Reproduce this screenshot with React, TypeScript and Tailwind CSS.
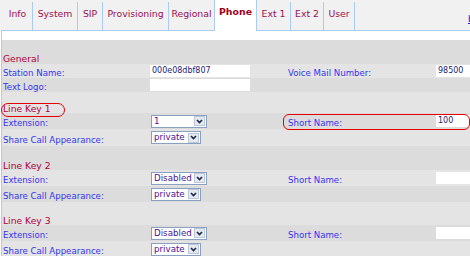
import type { FC, ReactNode } from "react"

// Tab strip (widths include the 1px separator on the right)
const tabs = [
  { label: "Info", w: "w-[30px]" },
  { label: "System", w: "w-[45px]" },
  { label: "SIP", w: "w-[25px]" },
  { label: "Provisioning", w: "w-[66px]" },
  { label: "Regional", w: "w-[45px]", noSep: true },
  { label: "Phone", w: "w-[43px]", active: true },
  { label: "Ext 1", w: "w-[34px]" },
  { label: "Ext 2", w: "w-[33px]" },
  { label: "User", w: "w-[31px]" },
]

const Label: FC<{ children: ReactNode }> = ({ children }) => (
  <span className="whitespace-nowrap text-[8.6px] leading-none text-[#3434f0]">{children}</span>
)

const TextBox: FC<{ value?: string; w?: string }> = ({ value = "", w = "w-[100px]" }) => (
  <div className={`h-[12px] ${w} bg-white pl-[2px] text-[8px] leading-[12px] text-[#22227a]`}>{value}</div>
)

const Chevron = () => (
  <svg width="7" height="5" viewBox="0 0 7 5">
    <path d="M1 1 L3.5 3.6 L6 1" fill="none" stroke="#1c2448" strokeWidth="1.6" />
  </svg>
)

const Select: FC<{ value: string; w: string }> = ({ value, w }) => (
  <div className={`ml-px flex h-[13px] ${w} items-center border border-[#8aa0c0] bg-white`}>
    <span className="flex-1 pl-[2px] text-[8.7px] leading-none text-[#4a1296]">{value}</span>
    <div className="mr-px flex h-[10px] w-[11px] items-center justify-center border border-[#bcc8da] bg-[#e4e9f1]">
      <Chevron />
    </div>
  </div>
)

const Row: FC<{
  h: string
  bg: string
  label?: string
  value?: ReactNode
  label2?: string
  value2?: ReactNode
}> = ({ h, bg, label, value, label2, value2 }) => (
  <div className={`flex ${h} items-center ${bg}`}>
    <div className="w-[148px] shrink-0 pl-px">{label && <Label>{label}</Label>}</div>
    <div className="w-[133px] shrink-0">{value}</div>
    <div className="w-[153px] shrink-0 pl-[5px]">{label2 && <Label>{label2}</Label>}</div>
    <div className="min-w-0 flex-1">{value2}</div>
  </div>
)

const Heading: FC<{ text: string; h: string; bg: string; lead?: string }> = ({
  text,
  h,
  bg,
  lead = "leading-[9px]",
}) => (
  <div className={`flex ${h} items-end ${bg} pl-px`}>
    <span className={`text-[9.2px] ${lead} text-[#b0003a]`}>{text}</span>
  </div>
)

const DARK = "bg-[#dcdcdc]"
const LIGHT = "bg-[#e4e4e4]"

export default function App() {
  return (
    <div className="relative h-[256px] w-[470px] overflow-hidden bg-white font-['DejaVu_Sans',Verdana,sans-serif]">
      {/* Tab bar */}
      <div className="flex h-[30px] items-start bg-[#f1f1f1] pl-[3px]">
        {tabs.map((t) =>
          t.active ? (
            <div
              key={t.label}
              className={`relative z-10 flex h-[31px] shrink-0 ${t.w} justify-center border-x border-[#a9cdf2] bg-white pt-[7px]`}
            >
              <span className="text-[9.4px] font-bold leading-none text-[#a0001e]">{t.label}</span>
            </div>
          ) : (
            <div key={t.label} className={`flex h-[30px] shrink-0 ${t.w} items-end`}>
              <div
                className={`flex h-[28px] w-full items-center justify-center pb-[4px] ${
                  t.noSep ? "" : "border-r border-[#a9cdf2]"
                }`}
              >
                <span className="whitespace-nowrap text-[9.3px] leading-none text-[#9a1050]">{t.label}</span>
              </div>
            </div>
          )
        )}
        <span className="ml-[113px] mt-[15px] shrink-0 whitespace-nowrap text-[9px] leading-none text-[#2020d0] underline">
          basic
        </span>
      </div>

      {/* Content */}
      <div className="ml-px border-l border-t border-[#a9cdf2] pt-[9px]">
        <Heading text="General" h="h-[24px]" bg={DARK} lead="leading-[11px]" />
        <Row
          h="h-[14px]"
          bg={LIGHT}
          label="Station Name:"
          value={<TextBox value="000e08dbf807" />}
          label2="Voice Mail Number:"
          value2={<TextBox value="98500" w="w-[40px]" />}
        />
        <Row h="h-[14px]" bg={DARK} label="Text Logo:" value={<TextBox />} />

        <Heading text="Line Key 1" h="h-[21px]" bg={LIGHT} />
        <Row
          h="h-[16px]"
          bg={DARK}
          label="Extension:"
          value={<Select value="1" w="w-[56px]" />}
          label2="Short Name:"
          value2={<TextBox value="100" w="w-[40px]" />}
        />
        <Row h="h-[17px]" bg={LIGHT} label="Share Call Appearance:" value={<Select value="private" w="w-[50px]" />} />

        <Heading text="Line Key 2" h="h-[24px]" bg={DARK} />
        <Row
          h="h-[16px]"
          bg={LIGHT}
          label="Extension:"
          value={<Select value="Disabled" w="w-[56px]" />}
          label2="Short Name:"
          value2={<TextBox w="w-[40px]" />}
        />
        <Row h="h-[16px]" bg={DARK} label="Share Call Appearance:" value={<Select value="private" w="w-[50px]" />} />

        <Heading text="Line Key 3" h="h-[23px]" bg={LIGHT} />
        <Row
          h="h-[16px]"
          bg={DARK}
          label="Extension:"
          value={<Select value="Disabled" w="w-[56px]" />}
          label2="Short Name:"
          value2={<TextBox w="w-[40px]" />}
        />
        <Row h="h-[16px]" bg={LIGHT} label="Share Call Appearance:" value={<Select value="private" w="w-[50px]" />} />
      </div>

      {/* Red annotation marks */}
      <div className="pointer-events-none absolute left-[1px] top-[103px] h-[14px] w-[64px] rounded-[7px] border-[1.5px] border-[#e40000]" />
      <div className="pointer-events-none absolute left-[283px] top-[114px] h-[16px] w-[187px] rounded-[6px] border-[1.5px] border-[#e40000]" />
    </div>
  )
}
